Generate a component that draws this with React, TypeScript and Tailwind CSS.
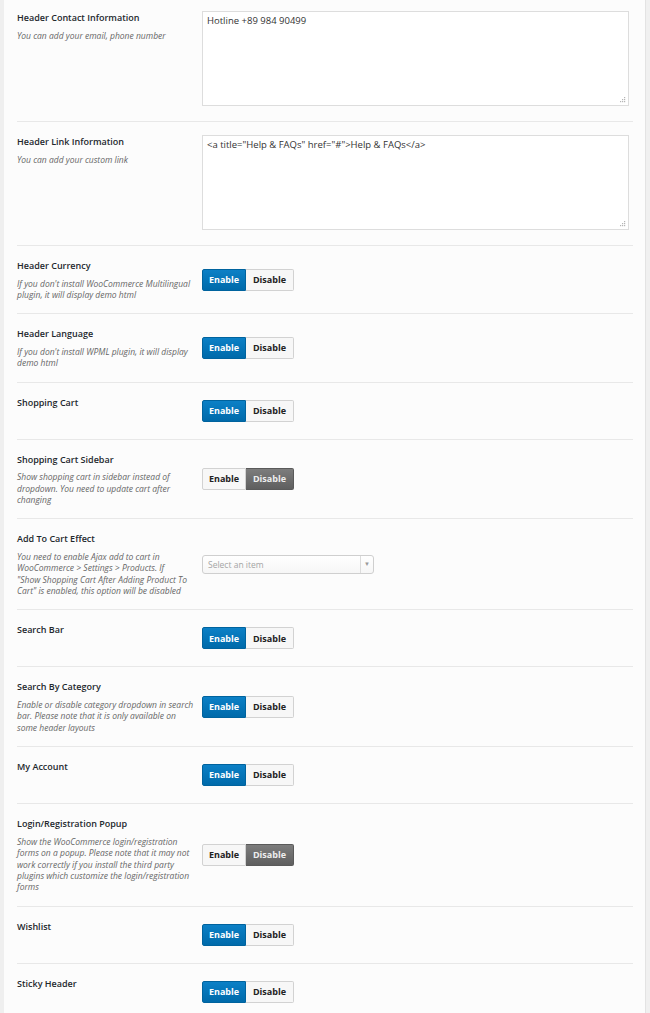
import React from 'react';

type Row =
  | { kind: 'textarea'; title: string; desc: string; value: string }
  | { kind: 'toggle'; title: string; desc?: string; on: boolean }
  | { kind: 'select'; title: string; desc: string };

const ROWS: Row[] = [
  { kind: 'textarea', title: 'Header Contact Information', desc: 'You can add your email, phone number', value: 'Hotline +89 984 90499' },
  { kind: 'textarea', title: 'Header Link Information', desc: 'You can add your custom link', value: '<a title="Help & FAQs" href="#">Help & FAQs</a>' },
  { kind: 'toggle', title: 'Header Currency', desc: "If you don't install WooCommerce Multilingual plugin, it will display demo html", on: true },
  { kind: 'toggle', title: 'Header Language', desc: "If you don't install WPML plugin, it will display demo html", on: true },
  { kind: 'toggle', title: 'Shopping Cart', on: true },
  { kind: 'toggle', title: 'Shopping Cart Sidebar', desc: 'Show shopping cart in sidebar instead of dropdown. You need to update cart after changing', on: false },
  { kind: 'select', title: 'Add To Cart Effect', desc: 'You need to enable Ajax add to cart in WooCommerce > Settings > Products. If\n"Show Shopping Cart After Adding Product To Cart" is enabled, this option will be disabled' },
  { kind: 'toggle', title: 'Search Bar', on: true },
  { kind: 'toggle', title: 'Search By Category', desc: 'Enable or disable category dropdown in search bar. Please note that it is only available on some header layouts', on: true },
  { kind: 'toggle', title: 'My Account', on: true },
  { kind: 'toggle', title: 'Login/Registration Popup', desc: 'Show the WooCommerce login/registration forms on a popup. Please note that it may not work correctly if you install the third party plugins which customize the login/registration forms', on: false },
  { kind: 'toggle', title: 'Wishlist', on: true },
  { kind: 'toggle', title: 'Sticky Header', on: true },
];

function Label({ title, desc }: { title: string; desc?: string }) {
  return (
    <div className="pr-[7px] min-h-[30px]">
      <div className="text-[9px] leading-[14px] font-semibold text-[#23282d]">{title}</div>
      {desc && (
        <p className="mt-[4.5px] whitespace-pre-line text-[8.5px] leading-[11.4px] italic text-[#666]">{desc}</p>
      )}
    </div>
  );
}

function Toggle({ on }: { on: boolean }) {
  return (
    <div className="flex h-[22px] text-[9px] font-bold">
      <button
        className={
          on
            ? 'w-[44px] rounded-l-[2px] border border-[#00639e] bg-gradient-to-b from-[#0c80c6] to-[#006aaa] text-white'
            : 'w-[44px] rounded-l-[2px] border border-[#d2d2d2] bg-[#f7f7f7] text-[#222]'
        }
      >
        Enable
      </button>
      <button
        className={
          on
            ? 'w-[48px] rounded-r-[2px] border border-l-0 border-[#d2d2d2] bg-[#f7f7f7] text-[#222]'
            : 'w-[48px] rounded-r-[2px] border border-l-0 border-[#5a5a5a] bg-gradient-to-b from-[#7d7d7d] to-[#5f5f5f] text-[#eeeeee]'
        }
      >
        Disable
      </button>
    </div>
  );
}

function Select() {
  return (
    <div className="flex h-[19px] w-[172px] items-stretch rounded-[3px] border border-[#cfcfcf] bg-gradient-to-b from-white to-[#f6f6f6]">
      <span className="flex-1 pl-[5px] text-[8.5px] leading-[17px] text-[#a5a5a5]">Select an item</span>
      <span className="flex w-[13px] items-center justify-center border-l border-[#dcdcdc] text-[6px] text-[#999]">▼</span>
    </div>
  );
}

function Grip() {
  return (
    <svg className="absolute bottom-[3px] right-[3px]" width="6" height="6" viewBox="0 0 6 6" fill="#b5b5b5">
      <rect x="4" y="0" width="1.2" height="1.2" />
      <rect x="2" y="2" width="1.2" height="1.2" />
      <rect x="4" y="2" width="1.2" height="1.2" />
      <rect x="0" y="4" width="1.2" height="1.2" />
      <rect x="2" y="4" width="1.2" height="1.2" />
      <rect x="4" y="4" width="1.2" height="1.2" />
    </svg>
  );
}

export default function App() {
  return (
    <div className="flex min-h-screen bg-[#fcfcfc] font-['Open_Sans',sans-serif]">
      <div className="w-[4px] shrink-0 bg-[#efefef]" />
      <div className="flex-1 pl-[13px] pr-[12px]">
        {ROWS.map((r, i) => (
          <div
            key={i}
            className={
              'grid grid-cols-[185px_1fr] border-b border-[#e8e8e8] pb-[13px] ' +
              (i === 0 ? 'pt-[11px] ' : 'pt-[13px] ') +
              (r.kind === 'textarea' ? 'items-start' : 'items-center')
            }
          >
            <Label title={r.title} desc={r.desc} />
            {r.kind === 'textarea' && (
              <div className="pr-[4px] pb-[2px]">
                <div className="relative w-[427px]">
                  <textarea
                    readOnly
                    defaultValue={r.value}
                    className="block h-[95px] w-full resize-none border border-[#dddddd] bg-white px-[4px] pt-[2px] text-[9.5px] leading-[14px] text-[#333] outline-none"
                  />
                  <Grip />
                </div>
              </div>
            )}
            {r.kind === 'toggle' && <Toggle on={r.on} />}
            {r.kind === 'select' && <Select />}
          </div>
        ))}
      </div>
      <div className="w-[5px] shrink-0 border-l border-[#e3e3e3] bg-[#f0f0f0]" />
    </div>
  );
}
